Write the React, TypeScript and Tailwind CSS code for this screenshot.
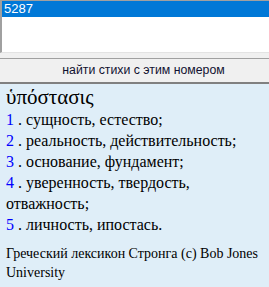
export default function App() {
  const senses = [
    { n: "1", text: "сущность, естество;" },
    { n: "2", text: "реальность, действительность;" },
    { n: "3", text: "основание, фундамент;" },
    { n: "4", text: "уверенность, твердость, отважность;" },
    { n: "5", text: "личность, ипостась." },
  ];

  return (
    <div className="flex h-[287px] w-[269px] flex-col overflow-hidden bg-[#f0f0f0]">
      {/* number list */}
      <div className="h-[53px] border-b border-l-2 border-t border-[#a0a0a0] border-b-[#e3e3e3] bg-white">
        <div className="h-[16px] bg-[#0078d7] pl-[2px] font-['Liberation_Sans',sans-serif] text-[13px] leading-[16px] text-white">
          5287
        </div>
      </div>

      <div className="h-[6px] border-b border-[#a0a0a0]" />

      <button className="h-[25px] border-b-2 border-[#808080] pl-[18px] font-['Liberation_Sans',sans-serif] text-[12.3px] text-[#101030]">
        найти стихи с этим номером
      </button>

      {/* entry */}
      <div className="flex-1 bg-[#dfeef8] px-[6px] pt-[1px] font-['Liberation_Serif',serif] text-black">
        <div className="text-[21px] leading-[24px]">ὑπόστασις</div>
        <div className="text-[16px] leading-[21px]">
          {senses.map((s) => (
            <div key={s.n}>
              <span className="text-[#0000ff]">{s.n}</span> . {s.text}
            </div>
          ))}
        </div>
        <div className="mt-[9px] text-[14px] leading-[19px]">
          Греческий лексикон Стронга (с) Bob Jones University
        </div>
      </div>
    </div>
  );
}
